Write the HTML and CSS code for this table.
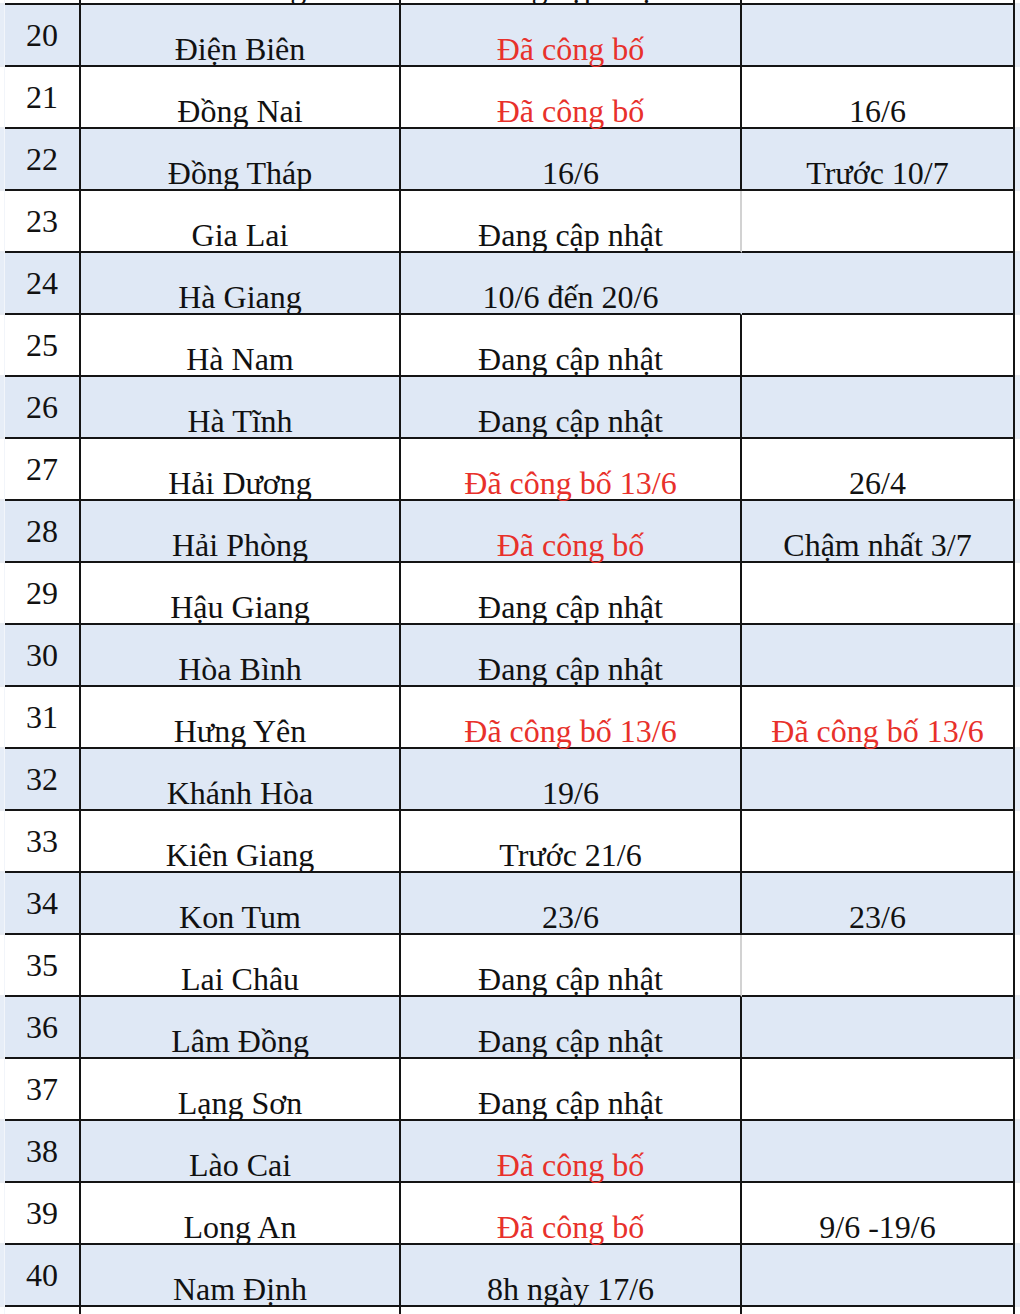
FILE: index.html
```html
<!DOCTYPE html>
<html lang="vi">
<head>
<meta charset="utf-8">
<title>Bảng lịch công bố điểm thi</title>
<link rel="stylesheet" href="styles.css">
</head>
<body>
<div class="sheet">
<div class="grid">
<div class="row"><div class="edge"></div><div class="cell no">19</div><div class="cell">Đắk Nông</div><div class="cell">Đang cập nhật</div><div class="cell"></div><div class="edge r"></div></div>
<div class="row b"><div class="edge"></div><div class="cell no">20</div><div class="cell">Điện Biên</div><div class="cell red">Đã công bố</div><div class="cell"></div><div class="edge r"></div></div>
<div class="row"><div class="edge"></div><div class="cell no">21</div><div class="cell">Đồng Nai</div><div class="cell red">Đã công bố</div><div class="cell">16/6</div><div class="edge r"></div></div>
<div class="row b"><div class="edge"></div><div class="cell no">22</div><div class="cell">Đồng Tháp</div><div class="cell">16/6</div><div class="cell">Trước 10/7</div><div class="edge r"></div></div>
<div class="row"><div class="edge"></div><div class="cell no">23</div><div class="cell">Gia Lai</div><div class="cell soft">Đang cập nhật</div><div class="cell"></div><div class="edge r"></div></div>
<div class="row b"><div class="edge"></div><div class="cell no">24</div><div class="cell">Hà Giang</div><div class="cell open">10/6 đến 20/6</div><div class="cell"></div><div class="edge r"></div></div>
<div class="row"><div class="edge"></div><div class="cell no">25</div><div class="cell">Hà Nam</div><div class="cell">Đang cập nhật</div><div class="cell"></div><div class="edge r"></div></div>
<div class="row b"><div class="edge"></div><div class="cell no">26</div><div class="cell">Hà Tĩnh</div><div class="cell">Đang cập nhật</div><div class="cell"></div><div class="edge r"></div></div>
<div class="row"><div class="edge"></div><div class="cell no">27</div><div class="cell">Hải Dương</div><div class="cell red">Đã công bố 13/6</div><div class="cell">26/4</div><div class="edge r"></div></div>
<div class="row b"><div class="edge"></div><div class="cell no">28</div><div class="cell">Hải Phòng</div><div class="cell red">Đã công bố</div><div class="cell">Chậm nhất 3/7</div><div class="edge r"></div></div>
<div class="row"><div class="edge"></div><div class="cell no">29</div><div class="cell">Hậu Giang</div><div class="cell">Đang cập nhật</div><div class="cell"></div><div class="edge r"></div></div>
<div class="row b"><div class="edge"></div><div class="cell no">30</div><div class="cell">Hòa Bình</div><div class="cell">Đang cập nhật</div><div class="cell"></div><div class="edge r"></div></div>
<div class="row"><div class="edge"></div><div class="cell no">31</div><div class="cell">Hưng Yên</div><div class="cell red">Đã công bố 13/6</div><div class="cell red">Đã công bố 13/6</div><div class="edge r"></div></div>
<div class="row b"><div class="edge"></div><div class="cell no">32</div><div class="cell">Khánh Hòa</div><div class="cell">19/6</div><div class="cell"></div><div class="edge r"></div></div>
<div class="row"><div class="edge"></div><div class="cell no">33</div><div class="cell">Kiên Giang</div><div class="cell">Trước 21/6</div><div class="cell"></div><div class="edge r"></div></div>
<div class="row b"><div class="edge"></div><div class="cell no">34</div><div class="cell">Kon Tum</div><div class="cell">23/6</div><div class="cell">23/6</div><div class="edge r"></div></div>
<div class="row"><div class="edge"></div><div class="cell no">35</div><div class="cell">Lai Châu</div><div class="cell soft">Đang cập nhật</div><div class="cell"></div><div class="edge r"></div></div>
<div class="row b"><div class="edge"></div><div class="cell no">36</div><div class="cell">Lâm Đồng</div><div class="cell">Đang cập nhật</div><div class="cell"></div><div class="edge r"></div></div>
<div class="row"><div class="edge"></div><div class="cell no">37</div><div class="cell">Lạng Sơn</div><div class="cell">Đang cập nhật</div><div class="cell"></div><div class="edge r"></div></div>
<div class="row b"><div class="edge"></div><div class="cell no">38</div><div class="cell">Lào Cai</div><div class="cell red">Đã công bố</div><div class="cell"></div><div class="edge r"></div></div>
<div class="row"><div class="edge"></div><div class="cell no">39</div><div class="cell">Long An</div><div class="cell red">Đã công bố</div><div class="cell">9/6 -19/6</div><div class="edge r"></div></div>
<div class="row b"><div class="edge"></div><div class="cell no">40</div><div class="cell">Nam Định</div><div class="cell">8h ngày 17/6</div><div class="cell"></div><div class="edge r"></div></div>
<div class="row"><div class="edge"></div><div class="cell no">41</div><div class="cell">Nghệ An</div><div class="cell">Đang cập nhật</div><div class="cell"></div><div class="edge r"></div></div>
</div>
</div>
</body>
</html>
```

FILE: styles.css
```css
html, body {
  margin: 0;
  padding: 0;
  background: #ffffff;
}

.sheet {
  width: 1020px;
  height: 1314px;
  overflow: hidden;
}

.grid {
  margin-top: -57px;
  width: 1020px;
  display: flex;
  flex-direction: column;
  font-family: "Liberation Serif", "Times New Roman", serif;
  font-size: 32px;
  color: #111111;
}

.row {
  display: grid;
  grid-template-columns: 5px 76px 320px 341px 273px 5px;
  height: 62px;
  background: #ffffff;
}

.row.b {
  background: #dfe8f5;
}

.cell {
  box-sizing: border-box;
  display: flex;
  align-items: flex-end;
  justify-content: center;
  line-height: 32px;
  padding-bottom: 0;
  white-space: nowrap;
  border-right: 2px solid #141414;
  border-bottom: 2px solid #141414;
}

.cell.no {
  align-items: center;
  padding-bottom: 1px;
}

.cell.red {
  color: #e8312b;
}

.cell.soft {
  border-right-color: #d2d2d2;
}

.cell.open {
  border-right-color: transparent;
}

.edge {
  box-sizing: border-box;
  border-right: 1px solid #f2f5fa;
  border-bottom: 2px solid #e6eaf0;
}

.row.b .edge {
  background: #e6edf7;
}

.edge.r {
  border-right: none;
}
```
